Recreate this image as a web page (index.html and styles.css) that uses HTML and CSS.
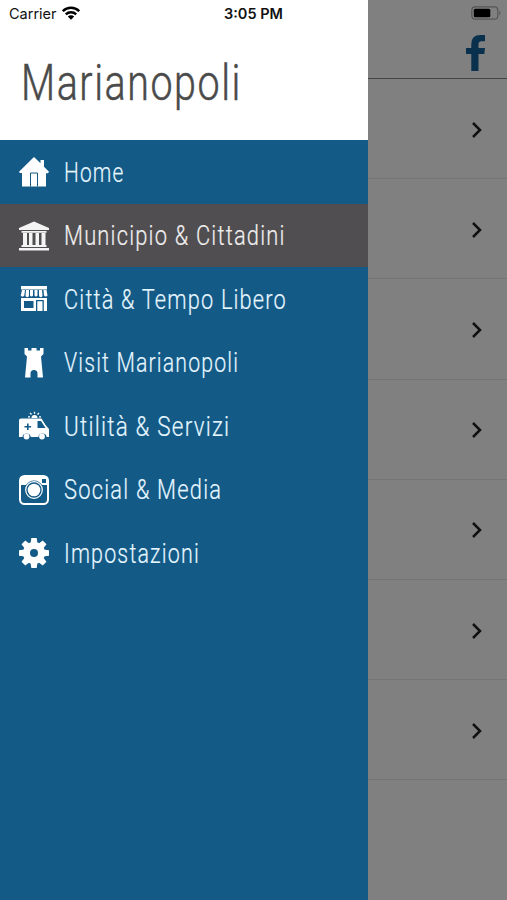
FILE: index.html
```html
<!DOCTYPE html>
<html lang="it">
<head>
<meta charset="utf-8">
<title>Marianopoli</title>
<link rel="stylesheet" href="styles.css">
</head>
<body>
<div class="app">
  <aside class="drawer">
    <header class="drawer-head">
      <div class="status">
        <span class="carrier">Carrier</span>
        <svg class="wifi" width="18" height="14" viewBox="0 0 18 14"><g fill="none" stroke="#000" stroke-width="2.4"><path d="M.8 5.2a11.6 11.6 0 0 1 16.4 0"/><path d="M3.8 8.4a7.4 7.4 0 0 1 10.4 0"/></g><path d="M5.8 10.5a4.6 4.6 0 0 1 6.4 0L9 13.8z"/></svg>
        <time class="clock">3:05 PM</time>
      </div>
      <h1 class="brand"><span>Marianopoli</span></h1>
    </header>
    <nav class="menu">
      <a class="item"><svg class="icon" viewBox="0 0 30 30"><path fill="#fff" d="M15 0l6.500 6.300V3H25v6.800l5 5-1 1.400h-2V29.500H3V16H.8L0 14.800z"/><path fill="none" stroke="#135a87" stroke-width="1" d="M11.500 29.500V16h7v13.500"/></svg><span class="label home">Home</span></a>
      <a class="item active"><svg class="icon" viewBox="0 0 30 30"><path fill="#f4f4f4" d="M15 .5L30 7v2H0V7zM2.500 10h25v1.800h-25zM4 12h4v12H4zM10 12h3.500v12H10zM16.500 12H20v12h-3.500zM22.500 12h4v12h-4zM2.500 24h25v2h-25zM0 27h30v2.600H0z"/></svg><span class="label town">Municipio &amp; Cittadini</span></a>
      <a class="item"><svg class="icon" viewBox="0 0 30 30"><path fill="#fff" d="M2 2h26v3.500H2zM3 6h3l-.7 5.500a2 2 0 0 1-3.600 0zM7 6h3v5.500a1.700 1.700 0 0 1-3.500 0zM11 6h3v5.500a1.600 1.600 0 0 1-3 0zM15.500 6h3v5.500a1.600 1.600 0 0 1-3 0zM20 6h3l.5 5.500a1.700 1.700 0 0 1-3.500 0zM24.500 6h3l1 5.500a2 2 0 0 1-3.500 0z"/><path fill="#fff" fill-rule="evenodd" d="M2 14h26v13H2zM5 17v7h9.500v-7zM17 16v11h1.300V17.200h5.200V27h1.300V16z"/></svg><span class="label city">Città &amp; Tempo Libero</span></a>
      <a class="item"><svg class="icon" viewBox="0 0 30 30"><path fill="#fff" d="M5.500 0H9v2.500h3.500V0h5v2.500H21V0h3.500v6L22 8.500l2 21h-5.500v-4a3.500 3.500 0 0 0-7 0v4H6l2-21L5.500 6z"/></svg><span class="label visit">Visit Marianopoli</span></a>
      <a class="item"><svg class="icon" viewBox="0 0 30 30"><path fill="#fff" fill-rule="evenodd" d="M2 7.500h20.500l4 6.500 3.500 4v8h-2.300a4.300 4.300 0 0 0-8.400 0h-7.500a4.300 4.300 0 0 0-8.400 0H0V9.500a2 2 0 0 1 2-2zM8 12.500V15H5.500v1.600H8v2.500h1.600v-2.500h2.500V15H9.600v-2.500zM18.500 10v7h8l-4.500-7z"/><circle cx="7.500" cy="25.500" r="2.900" fill="#fff"/><circle cx="23" cy="25.500" r="2.900" fill="#fff"/><path fill="#fff" d="M12.500 7a3 3 0 0 1 6 0z"/><path stroke="#fff" stroke-width="1.300" d="M15.500 2.800V.8M12.500 3.500L11 2M18.500 3.500L20 2M11 5.800H9M20 5.800h2"/></svg><span class="label util">Utilità &amp; Servizi</span></a>
      <a class="item"><svg class="icon" viewBox="0 0 30 30"><rect x="1" y="1" width="28" height="28" rx="4.500" fill="none" stroke="#fff" stroke-width="2"/><path fill="#fff" fill-rule="evenodd" d="M5 1h20q4 0 4 4v5H23a9.500 9.500 0 0 0-16 0H1V5q0-4 4-4zM23 4v4h4V4z"/><circle cx="15" cy="15" r="8.300" fill="#135a87" stroke="#fff" stroke-width="1.200"/><circle cx="15" cy="15" r="6.300" fill="#fff"/></svg><span class="label social">Social &amp; Media</span></a>
      <a class="item"><svg class="icon" viewBox="0 0 30 30"><circle cx="15" cy="15" r="7.500" fill="none" stroke="#fff" stroke-width="7"/><g fill="#fff"><path id="tooth" d="M11.500 6l.8-6h5.400l.8 6z"/><use href="#tooth" transform="rotate(45 15 15)"/><use href="#tooth" transform="rotate(90 15 15)"/><use href="#tooth" transform="rotate(135 15 15)"/><use href="#tooth" transform="rotate(180 15 15)"/><use href="#tooth" transform="rotate(225 15 15)"/><use href="#tooth" transform="rotate(270 15 15)"/><use href="#tooth" transform="rotate(315 15 15)"/></g></svg><span class="label settings">Impostazioni</span></a>
    </nav>
  </aside>
  <main class="page">
    <header class="bar">
      <svg class="battery" width="31" height="14" viewBox="0 0 31 14"><rect x=".8" y=".8" width="26" height="12.400" rx="3.500" fill="none" stroke="#555" stroke-width="1.200"/><rect x="2.800" y="2.800" width="16.500" height="8.400" rx="1.500"/><path fill="#555" d="M28.300 4.500q2.400 2.500 0 5z"/></svg>
      <svg class="facebook" width="19" height="36" viewBox="0 0 19 36"><path fill="#09304c" d="M19 0v6.300h-3.500q-3 0-3 3V13H19l-.7 6H12.500v17H5.300V19H0v-6h5.300V9Q5.300 0 14.500 0z"/></svg>
    </header>
    <ul class="list">
      <li><svg class="chev" viewBox="0 0 10 16"><path d="M1 1l7 7-7 7"/></svg></li>
      <li><svg class="chev" viewBox="0 0 10 16"><path d="M1 1l7 7-7 7"/></svg></li>
      <li><svg class="chev" viewBox="0 0 10 16"><path d="M1 1l7 7-7 7"/></svg></li>
      <li><svg class="chev" viewBox="0 0 10 16"><path d="M1 1l7 7-7 7"/></svg></li>
      <li><svg class="chev" viewBox="0 0 10 16"><path d="M1 1l7 7-7 7"/></svg></li>
      <li><svg class="chev" viewBox="0 0 10 16"><path d="M1 1l7 7-7 7"/></svg></li>
      <li><svg class="chev" viewBox="0 0 10 16"><path d="M1 1l7 7-7 7"/></svg></li>
    </ul>
  </main>
</div>
</body>
</html>
```
FILE: styles.css
```css
* { box-sizing: border-box; }
body { margin: 0; font-family: Roboto, sans-serif; }
.app { display: flex; width: 507px; height: 900px; overflow: hidden; }
.drawer { width: 367.5px; flex: none; background: #135a87; }
.drawer-head { height: 140.4px; background: #fff; }
.status { display: flex; align-items: center; height: 27px; padding-left: 9px; font: 14.500px Inter, sans-serif; color: #111; }
.carrier { width: 53px; }
.clock { margin-left: 144px; font-weight: 600; white-space: nowrap; }
.wifi { margin-top: -2px; }
.brand { margin: 0; padding: 27px 0 0 21px; font-size: 50.500px; line-height: 58px; font-weight: 300; color: #4a4a4a; }
.brand span, .label { display: inline-block; transform-origin: 0 50%; white-space: nowrap; letter-spacing: 1.500px; }
.brand span { letter-spacing: 2px; transform: scaleX(.78); -webkit-text-stroke: .5px #4a4a4a; }
.item { display: flex; align-items: center; height: 63.500px; padding-left: 19px; color: #e6f6ff; font-size: 27.500px; font-weight: 300; }
.item.active { background: #504e50; color: #f0efef; }
.icon { width: 30px; height: 30px; flex: none; margin-right: 15px; }
.label { transform: scaleX(.78); -webkit-text-stroke: .2px currentColor; }
.home { transform: scaleX(.76); }
.town { transform: scaleX(.796); }
.city { transform: scaleX(.791); }
.visit { transform: scaleX(.773); }
.util { transform: scaleX(.816); }
.social { transform: scaleX(.797); }
.page { flex: 1; background: #808080; }
.bar { display: flex; flex-direction: column; align-items: flex-end; height: 79px; padding-top: 6px; border-bottom: 1.500px solid #444; }
.battery { margin-right: 5px; }
.facebook { margin: 15px 22px 0 0; }
.list { margin: 0; padding: 0; list-style: none; }
.list li { display: flex; align-items: center; justify-content: flex-end; height: 100.200px; padding: 2px 25px 0 0; border-bottom: 1px solid #757575; }
.chev { width: 10px; height: 16px; fill: none; stroke: #111; stroke-width: 2.500; }
```
